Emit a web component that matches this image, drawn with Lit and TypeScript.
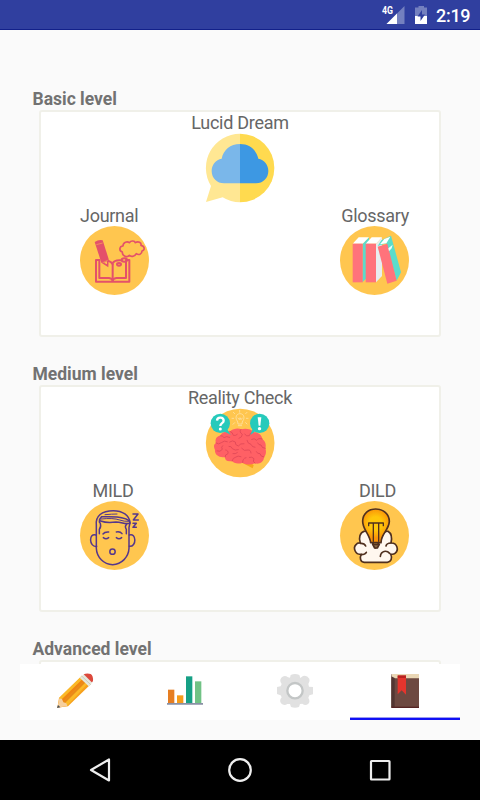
import { LitElement, html, css, svg } from "lit";
import { customElement, property } from "lit/decorators.js";

const lucid = svg`
  <path d="M150 71A103 103 0 0 0 63 228L48 276L98 262Q122 277 150 277Z" fill="#ffe793"/>
  <path d="M150 71A103 103 0 0 1 150 277Z" fill="#ffda4f"/>
  <path d="M150 102C121 102 100 120 95 146C77 149 65 164 65 183C65 204 81 220 102 220H150Z" fill="#7ab7ea"/>
  <path d="M150 102C179 102 199 120 205 146C223 149 235 164 235 183C235 204 219 220 198 220H150Z" fill="#3d98e3"/>`;

const disc = svg`<circle cx="148.500" cy="181.500" r="103.500" fill="#ffc64f"/>`;

const journal = svg`${disc}
  <g fill="none" stroke="#e4516a" stroke-width="6" stroke-linejoin="round" stroke-linecap="round">
    <path d="M103 180H93V245H193V180H183"/>
    <path d="M103 180V234H132Q143 235 143 243Q143 235 154 234H183V183"/>
    <path d="M143 194V242M143 190Q148 180 166 181"/>
    <path d="M115 181Q137 181 143 193"/>
    <path d="M172 156C161 153 163 138 174 138C174 126 187 123 193 128C198 121 209 122 211 128C220 122 230 128 228 136C240 138 240 151 231 153C231 163 221 166 214 161C209 171 197 171 193 166C187 174 171 168 172 156Z" stroke-width="5"/>
    <ellipse cx="178" cy="180" rx="8" ry="5"/><ellipse cx="162" cy="193" rx="6" ry="4"/>
  </g>
  <path d="M89 126Q101 118 113 121L131 177L130 202L109 188Z" fill="#e4516a"/>
  <path d="M94 134L113 129M113 188L128 181" stroke="#ffc64f" stroke-width="1.500"/>
  <path d="M117 188L126 184L126 193Z" fill="#ffc64f"/>`;

const glossary = svg`${disc}
  <path d="M113 131L132 112V228L112 247Z" fill="#5bdccb"/>
  <path d="M83 131L101 112H132L113 131Z" fill="#fff"/>
  <path d="M83 131H113V247H83Z" fill="#ff737b"/>
  <path d="M153 131L171 112V228L153 247Z" fill="#e8edef"/>
  <path d="M122 131L140 112H171L153 131Z" fill="#fff"/>
  <path d="M122 131H153V247H122Z" fill="#ff737b"/>
  <path d="M158 138L169 121L198 107L228 217L215 242L184 130Z" fill="#5bdccb"/>
  <path d="M165 133L178 117L196 110L184 130Z" fill="#fff"/>
  <path d="M158 140L187 131L215 242L187 251Z" fill="#ff737b"/>
  <path d="M190 145L203 134L200 145L192 154Z" fill="#e9fffb"/>`;

const reality = svg`
  <circle cx="150.500" cy="174" r="103" fill="#ffc64f"/>
  <g fill="none" stroke="#ffe1a3" stroke-width="2.500" stroke-linecap="round">
    <path d="M144 116C144 107 138 106 138 98C138 82 162 82 162 98C162 106 156 107 156 116ZM145 122H155M144 99L148 104L150 98L153 104L157 99M149 82V76M134 86L130 82M167 86L171 82M131 100H126M169 100H174M134 113L129 118M167 113L171 117"/>
  </g>
  <path d="M159 235L188 250L191 241L176 229Z" fill="#f7a61c"/>
  <path d="M75 195C69 183 73 176 78 174C73 163 82 151 91 152C96 140 112 138 120 139C130 130 146 129 153 133C167 129 184 132 190 141C205 142 216 151 217 162C227 169 229 181 226 190C231 203 225 214 222 216C222 232 206 239 195 235C181 241 164 239 158 233C144 238 131 235 126 228C111 231 104 224 105 216C88 220 73 209 75 195Z" fill="#ff6065"/>
  <g fill="none" stroke="#df4757" stroke-width="2.500" stroke-linecap="round">
    <path d="M78 174Q86 180 94 173Q103 165 112 170M91 152Q98 151 102 158Q109 152 119 157M120 139Q128 141 130 151Q137 153 142 148M153 133Q146 141 157 148Q157 157 147 160M190 141Q179 142 178 152Q168 156 164 147M217 162Q205 158 200 166Q193 158 185 163M226 190Q215 190 213 180Q206 181 203 174M222 216Q212 216 210 206Q202 207 199 200M195 235Q186 229 192 221Q186 214 178 217M158 233Q157 220 168 218M126 228Q128 218 138 216Q143 211 153 215M105 216Q105 208 114 206Q116 196 107 195M81 198Q91 202 97 193Q92 186 98 182M119 171Q128 164 136 171Q134 180 145 183Q151 174 162 176M171 166Q173 177 183 178Q186 187 195 187M117 184Q125 183 127 191Q135 198 145 194M155 190Q162 200 174 195Q182 194 183 204M129 206Q136 208 142 203"/>
  </g>
  <path d="M104 140L122 149L111 132ZM194 140L181 150L188 132Z" fill="#26cabb"/>
  <circle cx="91" cy="115" r="29" fill="#26cabb"/><circle cx="209" cy="115" r="29" fill="#26cabb"/>
  <path d="M81 107C82 94 101 96 101 107C101 115 91 114 91 123" fill="none" stroke="#fff" stroke-width="7"/>
  <circle cx="91" cy="132" r="4.500" fill="#fff"/>
  <path d="M203 97H214L211 122H206Z" fill="#fff"/><circle cx="208.500" cy="131" r="5" fill="#fff"/>`;

const mild = svg`${disc}
  <g fill="none" stroke="#55378c" stroke-width="4.500" stroke-linecap="round" stroke-linejoin="round">
    <path d="M94 180V150C91 123 110 107 145 107C172 107 194 121 195 144L192 157V220C191 246 170 268 143 269C116 268 95 247 94 220Z"/>
    <path d="M93 180C71 172 71 217 95 214M193 180C214 172 216 216 193 214"/>
    <path d="M103 176V163Q109 156 106 145L103 141Q103 131 110 125C124 126 153 123 173 129Q194 133 195 144C183 150 171 141 153 141Q126 145 107 138M185 148Q178 154 184 163V176"/>
    <path d="M109 132Q145 128 164 135Q178 140 190 139M120 119Q141 117 156 117" stroke-width="3"/>
    <path d="M114 177Q119 170 131 171M154 171Q166 169 171 176M115 188Q123 195 131 188M154 188Q162 195 170 188"/>
    <circle cx="142.500" cy="230" r="8"/>
    <path d="M204 117H219L205 135H220M204 145H214L204 157H214" stroke-width="4.500"/>
  </g>`;

const dild = svg`
  <defs><radialGradient id="glow" gradientUnits="userSpaceOnUse" cx="152" cy="145" r="44">
    <stop offset=".45" stop-color="#ffc60b"/><stop offset="1" stop-color="#fa9308"/></radialGradient></defs>
  ${disc}
  <g stroke="#50301f" stroke-width="5" stroke-linejoin="round" stroke-linecap="round">
    <path d="M118 262C106 261 103 248 109 238C91 240 83 219 93 209Q97 203 106 204C100 190 105 172 117 169Q130 166 135 190L152 219L169 190Q176 166 189 169Q204 178 198 204C216 203 223 225 210 235Q205 239 197 237C203 250 198 261 187 262Z" fill="#fff7ef"/>
    <path d="M137 203C134 176 112 163 113 138C114 115 131 102 152 102C174 102 193 117 193 140C191 166 168 177 168 203Z" fill="url(#glow)"/>
    <path d="M143 208H163L157 219H149Z" fill="#8b6847"/>
    <path d="M131 152V144H175V152M145 146V199M161 146V199" fill="none" stroke-width="4"/>
    <path d="M106 205Q118 204 122 213M109 239Q120 239 124 232M198 204Q185 204 183 213M166 244C168 227 185 225 194 235" fill="none"/>
  </g>`;

const pencil = svg`
  <path d="M142 233L147 204L216 137L242 163L174 229Z" fill="#f7a01c"/>
  <path d="M152 210L218 144L224 150L158 216Z" fill="#ef8514"/>
  <path d="M158 216L224 150L229 155L164 221Z" fill="#e98a19"/>
  <path d="M147 204L214 139L220 145L155 208ZM163 221L229 155L234 160L171 228Z" fill="#fbb927"/>
  <path d="M142 233L148 205L156 207L160 217L169 220L172 228Z" fill="#f6cf9d"/>
  <path d="M141 234L144 225L151 232Z" fill="#47505a"/>
  <path d="M209 143L223 132L248 157L236 169Z" fill="#e6e7dc"/>
  <path d="M215 138L242 164" stroke="#c9ccbd" stroke-width="3"/>
  <path d="M221 133Q230 129 242 132Q250 136 249 154L245 157Z" fill="#dc493c"/>`;

const chart = svg`
  <path d="M474 179H493V220H474Z" fill="#e67e22"/><path d="M501 196H520V220H501Z" fill="#f59c1a"/>
  <path d="M528 139H547V220H528Z" fill="#16a085"/><path d="M555 154H574V220H555Z" fill="#71c285"/>
  <path d="M471 219H579V224H471Z" fill="#8991a5"/>`;

const gear = svg`
  <path d="M152 135Q165 129 178 135L181 144L189 138Q201 135 208 146Q211 153 205 162L207 170L219 171V193L208 196L205 203Q212 216 204 222Q196 228 187 221L180 222L177 231Q165 236 153 231L150 222L142 222Q132 229 123 220Q117 211 125 202L122 196L111 192V171L122 169L125 162Q117 151 124 143Q133 134 144 142L150 143Z" fill="#e1e1e1"/>
  <circle cx="165" cy="182" r="23" fill="#fff" stroke="#c3c6c6" stroke-width="7"/>`;

const book = svg`
  <path d="M454 133H537V233H454Z" fill="#6d4941"/>
  <path d="M456 132H537V145H454Z" fill="#ead7b5"/><path d="M454 139L464 144V231H454Z" fill="#523632"/>
  <path d="M454 230H537V234H454Z" fill="#552424"/>
  <path d="M473 137H498V194L485 181L473 193Z" fill="#e5352d"/><path d="M473 136H498V144H473Z" fill="#b9221f"/>`;

const icon = (art: unknown, box: string) => html`<svg class="icon" viewBox=${box}>${art}</svg>`;
const SIDE = "42 75 210 210";
const TOP = "45 69 210 210";

@customElement("level-card")
export class LevelCard extends LitElement {
  @property() heading = "";
  @property({ attribute: false }) topics: { name: string; art: unknown; side: string }[] = [];
  static styles = css`
    :host { display: block; height: 275px; }
    .heading { margin: 0 0 0 32.500px; height: 22px; font-size: 17.500px; line-height: 23px; font-weight: 700; color: #727272; }
    .card { box-sizing: border-box; margin: 0 39px; height: 227px; border: 2px solid #f0f0e9; border-radius: 3px; background: #fff;
      display: grid; grid-template: 92px 1fr / 1fr 1fr; padding: 1px 30px 0 38px; }
    .topic { display: flex; flex-direction: column; }
    .top { grid-column: 1 / 3; align-items: center; padding-right: 8px; }
    .right { align-items: flex-end; }
    .label { font-size: 18px; letter-spacing: -0.280px; line-height: 20px; height: 20px; color: #666; white-space: nowrap; }
    .left .label, .right .label { line-height: 21px; }
    .left .label { padding-left: 1px; }
    .short .label { width: 68px; text-align: center; padding: 0; }
    .right.short .label { width: 63px; }
    .icon { width: 70px; height: 70px; display: block; }
  `;
  render() {
    return html`<h2 class="heading">${this.heading}</h2>
      <div class="card">${this.topics.map((t) => html`
        <div class="topic ${t.side}"><span class="label">${t.name}</span>
          ${icon(t.art, t.side === "top" ? TOP : SIDE)}</div>`)}</div>`;
  }
}

@customElement("app-root")
export class AppRoot extends LitElement {
  static styles = css`
    :host { display: flex; flex-direction: column; width: 480px; height: 800px; overflow: hidden; background: #fafafa; font-family: Roboto, "Noto Sans", sans-serif; }
    .status { box-sizing: border-box; flex: none; height: 30px; background: #303f9f; border-bottom: 1px solid #12208a; display: flex; justify-content: flex-end; }
    .signals { width: 60px; height: 29px; }
    .net { font: 700 10px Roboto, sans-serif; fill: #fff; }
    .clock { width: 44px; padding-left: 1px; color: #fff; font-size: 18px; letter-spacing: -0.300px; font-weight: 500; line-height: 31px; }
    .scroll { height: 634px; flex: none; overflow: hidden; padding-top: 58px; box-sizing: border-box; }
    .tabs { flex: none; margin: 0 20px; height: 56px; display: grid; grid-template-columns: repeat(4, 110px); background: #fff; }
    .tab { box-sizing: border-box; height: 56px; }
    .tab.active { border-bottom: 2px solid #1010f5; box-shadow: inset 0 -1px #9c9cf0; }
    .tab .icon { width: 110px; height: 53px; display: block; }
    .gap { height: 20px; flex: none; }
    .nav { flex: none; height: 60px; background: #000; }
    .nav svg { display: block; }
  `;
  render() {
    const levels = [
      { heading: "Basic level", topics: [
        { name: "Lucid Dream", art: lucid, side: "top" },
        { name: "Journal", art: journal, side: "left" },
        { name: "Glossary", art: glossary, side: "right" }] },
      { heading: "Medium level", topics: [
        { name: "Reality Check", art: reality, side: "top" },
        { name: "MILD", art: mild, side: "left short" },
        { name: "DILD", art: dild, side: "right short" }] },
      { heading: "Advanced level", topics: [] },
    ];
    return html`
      <div class="status">
        <svg class="signals" viewBox="0 0 60 29">
          <text class="net" x="7" y="14" textLength="11" lengthAdjust="spacingAndGlyphs">4G</text>
          <path d="M11.500 24L29.500 6V24Z" fill="#7480bf"/><path d="M11.500 24L22 13.500V24Z" fill="#fff"/>
          <path d="M40 7.500H43.500V6H49V7.500H52V16H40Z" fill="#7480bf"/><path d="M40 16H52V24H40Z" fill="#fff"/>
          <path d="M47 10L42.500 16.500H45.500V21L50 14.500H47Z" fill="#303f9f"/>
        </svg>
        <span class="clock">2:19</span>
      </div>
      <main class="scroll">${levels.map((l) => html`<level-card .heading=${l.heading} .topics=${l.topics}></level-card>`)}</main>
      <nav class="tabs">
        <div class="tab">${icon(pencil, "30 102 330 159")}</div>
        <div class="tab">${icon(chart, "360 102 330 159")}</div>
        <div class="tab">${icon(gear, "0 102 330 159")}</div>
        <div class="tab active">${icon(book, "330 102 330 159")}</div>
      </nav>
      <div class="gap"></div>
      <div class="nav"><svg width="480" height="60" viewBox="0 0 480 60" fill="none" stroke="#eee" stroke-width="2.200" stroke-linejoin="round">
        <path d="M109 19.500V40.500L91 30Z"/><circle cx="240" cy="30" r="10.800"/><rect x="371" y="21" width="18.500" height="18.500" rx=".5"/>
      </svg></div>`;
  }
}
